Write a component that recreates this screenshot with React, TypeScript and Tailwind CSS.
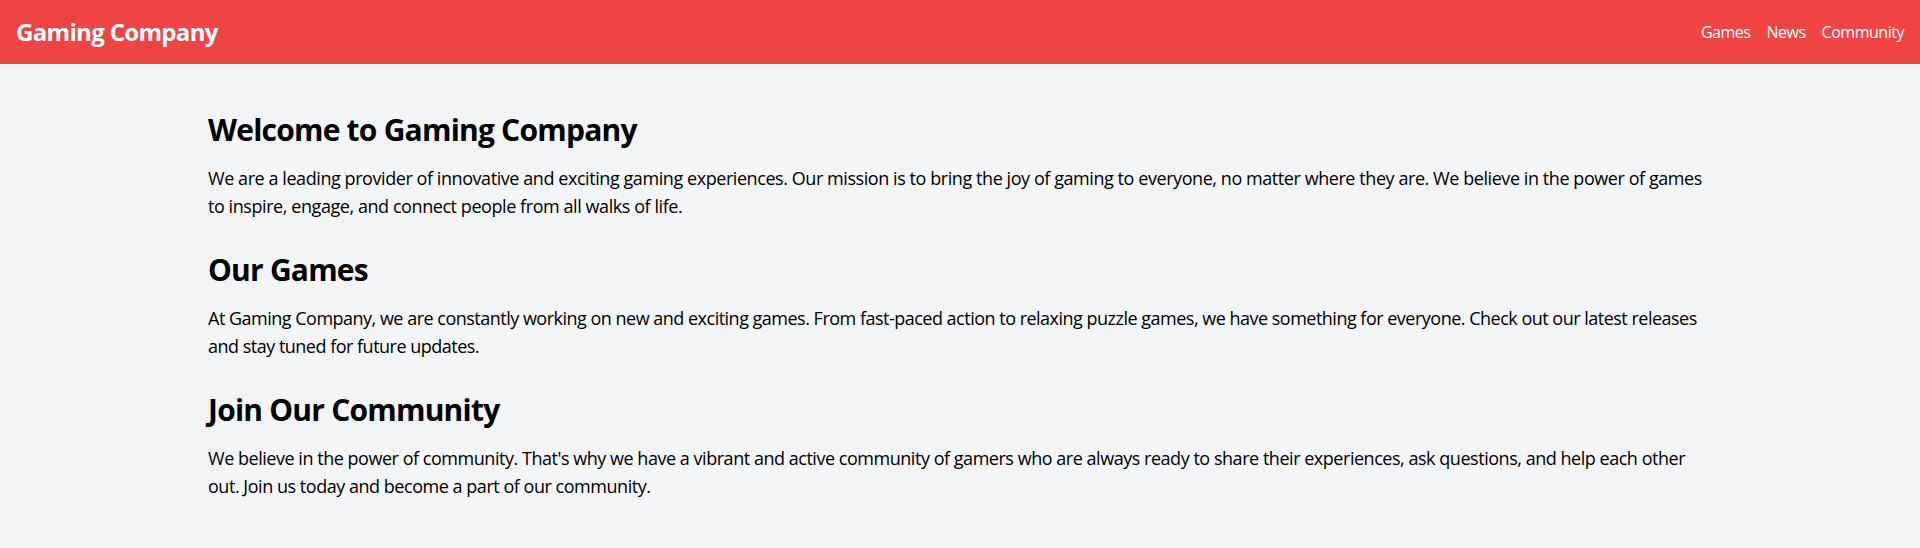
export default function App() {
  const sections = [
    {
      title: "Welcome to Gaming Company",
      body: "We are a leading provider of innovative and exciting gaming experiences. Our mission is to bring the joy of gaming to everyone, no matter where they are. We believe in the power of games to inspire, engage, and connect people from all walks of life.",
      tracking: "tracking-[-0.024em]",
    },
    {
      title: "Our Games",
      body: "At Gaming Company, we are constantly working on new and exciting games. From fast-paced action to relaxing puzzle games, we have something for everyone. Check out our latest releases and stay tuned for future updates.",
      tracking: "tracking-[-0.028em]",
    },
    {
      title: "Join Our Community",
      body: "We believe in the power of community. That's why we have a vibrant and active community of gamers who are always ready to share their experiences, ask questions, and help each other out. Join us today and become a part of our community.",
      tracking: "tracking-[-0.026em]",
    },
  ];

  return (
    <div className="min-h-screen bg-[#f3f4f6] font-['Open_Sans',sans-serif] text-black">
      <header className="bg-[#ef4444] text-white">
        <div className="flex items-center justify-between p-4">
          <h1 className="text-2xl font-bold tracking-[-0.028em]">Gaming Company</h1>
          <nav className="flex gap-4 tracking-[-0.03em]">
            <a href="#">Games</a>
            <a href="#">News</a>
            <a href="#">Community</a>
          </nav>
        </div>
      </header>

      <main className="container mx-auto px-4 py-12">
        {sections.map((s) => (
          <section key={s.title} className="mb-8">
            <h2 className="text-3xl font-bold mb-4 tracking-[-0.026em]">{s.title}</h2>
            <p className={`text-lg ${s.tracking}`}>{s.body}</p>
          </section>
        ))}
      </main>
    </div>
  );
}
